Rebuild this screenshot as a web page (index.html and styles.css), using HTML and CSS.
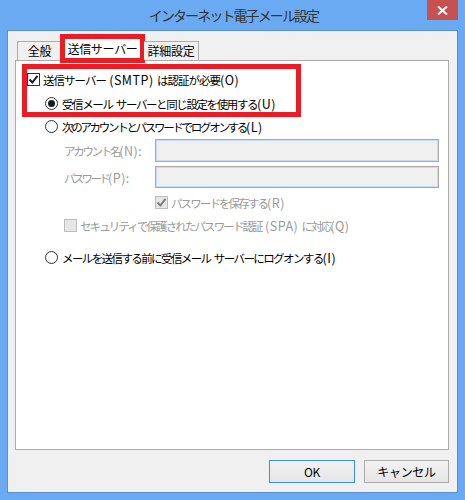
FILE: index.html
```html
<!DOCTYPE html>
<html lang="ja">
<head>
<meta charset="utf-8">
<link rel="stylesheet" href="styles.css">
</head>
<body>
<div class="win">
  <div class="titlebar">
    <div class="title">インターネット電子メール設定</div>
    <div class="close"><svg width="11" height="9" viewBox="0 0 11 9"><path d="M1 0.5 L10 8.5 M10 0.5 L1 8.5" stroke="#fff" stroke-width="2" fill="none"/></svg></div>
  </div>
  <div class="client">
    <div class="tabs">
      <div class="tab">全般</div>
      <div class="tab active">送信サーバー</div>
      <div class="tab last">詳細設定</div>
    </div>
    <div class="panel">
      <div class="highlight">
        <div class="row r1"><span class="cb"><svg width="11" height="11" viewBox="0 0 11 11"><path d="M1.5 5.5 L4.3 8.5 L9.5 1.8" stroke="#1a1a1a" stroke-width="2" fill="none"/></svg></span><span class="txt">送信サーバー<span class="l"> (SMTP) </span>は認証が必要<span class="l">(O)</span></span></div>
        <div class="row r2"><span class="radio on"><span class="dot"></span></span><span class="txt">受信メール<span class="l"> </span>サーバーと同じ設定を使用する<span class="l">(U)</span></span></div>
      </div>
      <div class="row r3"><span class="radio"></span><span class="txt">次のアカウントとパスワードでログオンする<span class="l">(L)</span></span></div>
      <div class="field f1"><span class="label ln">アカウント名<span class="l">(N):</span></span><span class="input"></span></div>
      <div class="field f2"><span class="label lp">パスワード<span class="l">(P):</span></span><span class="input"></span></div>
      <div class="row r4"><span class="cb dis"><svg width="11" height="11" viewBox="0 0 11 11"><path d="M1.5 5.5 L4.3 8.5 L9.5 1.8" stroke="#7c7c7c" stroke-width="2" fill="none"/></svg></span><span class="txt gray">パスワードを保存する<span class="l">(R)</span></span></div>
      <div class="row r5"><span class="cb dis"></span><span class="txt gray">セキュリティで保護されたパスワード認証<span class="l"> (SPA) </span>に対応<span class="l">(Q)</span></span></div>
      <div class="row r6"><span class="radio"></span><span class="txt">メールを送信する前に受信メール<span class="l"> </span>サーバーにログオンする<span class="l">(I)</span></span></div>
    </div>
    <div class="buttons">
      <div class="btn ok">OK</div>
      <div class="btn cancel">キャンセル</div>
    </div>
  </div>
</div>
</body>
</html>
```
FILE: styles.css
```css
* { box-sizing: border-box; }
html, body { margin: 0; padding: 0; }
body {
  width: 465px;
  height: 500px;
  font-family: "Noto Sans CJK JP", "Noto Sans", sans-serif;
  color: #000;
}
.win {
  width: 465px;
  height: 500px;
  background: #6aaaf2;
  padding: 0 7px 7px 7px;
  display: flex;
  flex-direction: column;
}
.titlebar {
  position: relative;
  height: 30px;
  flex: none;
}
.title {
  text-align: center;
  line-height: 30px;
  font-size: 14px;
  letter-spacing: -1.9px;
  color: #333;
  padding-left: 2px;
}
.close {
  position: absolute;
  top: 0;
  right: 0;
  width: 31px;
  height: 20px;
  background: #c75050;
  display: flex;
  align-items: center;
  justify-content: center;
}
.client {
  flex: 1;
  background: #f0f0f0;
  border: 1px solid #5a90d2;
  display: flex;
  flex-direction: column;
}
.tabs {
  height: 29px;
  display: flex;
  align-items: flex-end;
  padding-left: 9px;
  font-size: 12px;
  letter-spacing: -0.3px;
  position: relative;
  z-index: 2;
}
.tab {
  height: 19px;
  border: 1px solid #acacac;
  border-bottom: none;
  background: #f0f0f0;
  line-height: 18px;
  text-align: center;
}
.tab:first-child { width: 45px; }
.tab.active {
  width: 85px;
  height: 29px;
  margin: 0 0 -3px -2px;
  border: 5px solid #ec1c24;
  background: #fff;
  line-height: 19px;
}
.tab.last {
  width: 55px;
  margin-left: -1px;
  border-left: none;
}
.panel {
  width: 434px;
  height: 390px;
  margin-left: 7px;
  background: #fff;
  border: 1px solid #acacac;
  font-size: 11.5px;
  position: relative;
  z-index: 1;
}
.l {
  font-size: 12.5px;
  letter-spacing: 0.5px;
}
.highlight {
  width: 279px;
  height: 53px;
  margin: 3px 0 0 6px;
  border: 5px solid #ec1c24;
}
.row {
  display: flex;
  align-items: center;
  height: 13px;
  gap: 3px;
  white-space: nowrap;
}
.txt { line-height: 13px; }
.gray { color: #9a9a9a; }
.r1 { margin-top: 4px; letter-spacing: -1px; }
.r2 { margin-top: 11px; padding-left: 18px; gap: 4px; letter-spacing: -1.4px; }
.r3 { margin-top: 3px; padding-left: 29px; gap: 4px; letter-spacing: -2.3px; }
.r4 { margin-top: 8px; padding-left: 139px; letter-spacing: -1.9px; }
.r5 { margin-top: 10px; padding-left: 48px; letter-spacing: -1.9px; }
.r6 { margin-top: 19px; padding-left: 29px; gap: 4px; letter-spacing: -1.6px; }
.cb {
  width: 13px;
  height: 13px;
  flex: none;
  border: 1px solid #333;
  background: #fff;
  display: flex;
  align-items: center;
  justify-content: center;
}
.cb.dis {
  border-color: #bcbcbc;
  background: #e6e6e6;
}
.radio {
  width: 13px;
  height: 13px;
  flex: none;
  border: 1px solid #333;
  border-radius: 50%;
  background: #fff;
  display: flex;
  align-items: center;
  justify-content: center;
}
.dot {
  width: 7px;
  height: 7px;
  border-radius: 50%;
  background: #1a1a1a;
}
.field {
  display: flex;
  align-items: center;
  padding-left: 48px;
  height: 22px;
  color: #9a9a9a;
  white-space: nowrap;
}
.f1 { margin-top: 6px; height: 23px; }
.f2 { margin-top: 4px; }
.label { width: 91px; flex: none; }
.ln { letter-spacing: -2.3px; }
.lp { letter-spacing: -2.7px; }
.input {
  width: 284px;
  height: 100%;
  background: #f0f0f0;
  border: 1px solid #ababab;
  box-shadow: inset 0 0 0 1px #c7dbf2;
}
.buttons {
  display: flex;
  justify-content: flex-end;
  gap: 9px;
  margin-top: 10px;
  padding-right: 8px;
  font-size: 12px;
}
.btn {
  height: 23px;
  line-height: 21px;
  text-align: center;
  background: linear-gradient(#f2f2f2, #e6e6e6);
  border: 1px solid #acacac;
  letter-spacing: -0.3px;
}
.ok { width: 86px; border-color: #3c8fe6; }
.cancel { width: 85px; }
```
